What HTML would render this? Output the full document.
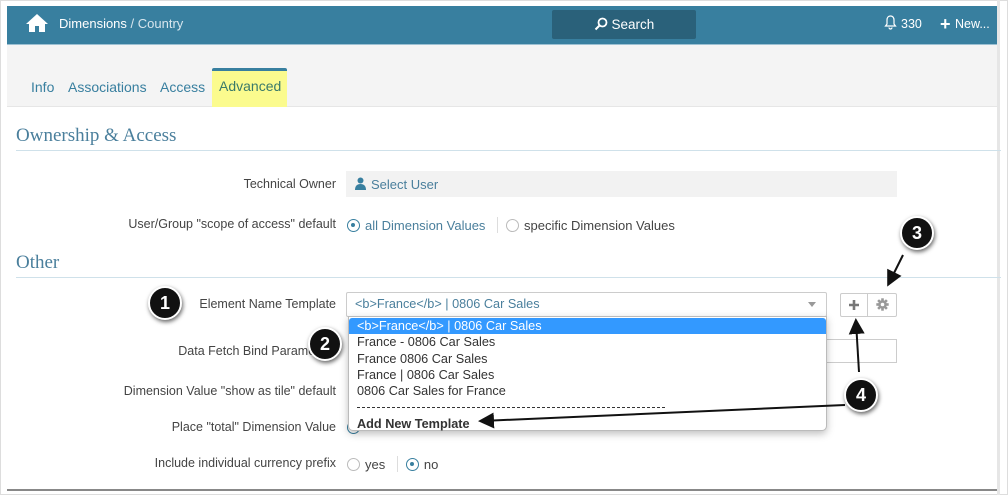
<!DOCTYPE html>
<html><head><meta charset="utf-8"><style>
*{box-sizing:border-box;margin:0;padding:0}
body{width:1008px;height:495px;background:#fff;font-family:"Liberation Sans",sans-serif;position:relative;overflow:hidden;font-size:13px}
.a{position:absolute}
.lbl{position:absolute;right:672px;color:#444;font-size:12.5px;white-space:nowrap}
.radio{display:inline-block;width:13px;height:13px;border:1px solid #bbb;border-radius:50%;vertical-align:-2px;margin-right:5px;position:relative}
.radio.on{border:1.5px solid #387f9f}
.radio.on:after{content:"";position:absolute;left:3px;top:3px;width:4px;height:4px;border-radius:50%;background:#387f9f}
.circ{position:absolute;width:34px;height:34px;border-radius:50%;background:#111;border:2px solid #fff;box-shadow:1px 2px 4px rgba(0,0,0,.6);color:#fff;font-weight:bold;font-size:18px;text-align:center;line-height:30px}
.dd div{height:16.3px;line-height:16px;padding-left:8px;font-size:12.7px;color:#333}
</style></head><body>
<div class="a" style="left:0;top:0;width:1008px;height:495px;border:1px solid #ddd"></div>
<div class="a" style="left:997px;top:0;width:3px;height:495px;background:#e6e6e6"></div>
<div class="a" style="left:7px;top:6px;width:990px;height:38px;background:#387f9f"></div>
<svg class="a" style="left:25px;top:13px" width="24" height="20" viewBox="0 0 24 20"><path d="M12 1L1 11h3v8h6v-6h4v6h6v-8h3z" fill="#fff"/></svg>
<div class="a" style="left:59px;top:16px;color:#fff;font-size:13px">Dimensions <span style="color:#d7e6ee">/ Country</span></div>
<div class="a" style="left:552px;top:10px;width:144px;height:29px;background:#2a617a;border-radius:2px;color:#fff;font-size:13.5px;text-align:center;line-height:29px">
<svg width="14" height="14" viewBox="0 0 14 14" style="vertical-align:-2px"><circle cx="8.5" cy="5.5" r="4" fill="none" stroke="#fff" stroke-width="1.8"/><path d="M5.5 8.5L1.5 12.5" stroke="#fff" stroke-width="2"/></svg> Search</div>
<svg class="a" style="left:884px;top:15px" width="13" height="15" viewBox="0 0 13 15"><path d="M6.5 1C4 1 3 3 3 5v4L1.5 11h10L10 9V5C10 3 9 1 6.5 1zM5 12.5a1.5 1.5 0 003 0" fill="none" stroke="#fff" stroke-width="1.2"/></svg>
<div class="a" style="left:901px;top:17px;color:#fff;font-size:12.5px">330</div>
<div class="a" style="left:940px;top:14px;color:#fff;font-size:18px;font-weight:bold">+</div>
<div class="a" style="left:955px;top:17px;color:#fff;font-size:12.5px">New...</div>
<div class="a" style="left:7px;top:44px;width:990px;height:63px;background:#f4f4f4;border-top:1px solid #9cc0d2;border-bottom:1px solid #e6e6e6"></div>
<div class="a" style="left:212px;top:68px;width:75px;height:39px;background:#fbfb8e;border-top:3px solid #387f9f;border-radius:2px 2px 0 0"></div>
<div class="a" style="left:31px;top:79px;color:#387f9f;font-size:14px">Info</div>
<div class="a" style="left:68px;top:79px;color:#387f9f;font-size:14px">Associations</div>
<div class="a" style="left:160px;top:79px;color:#387f9f;font-size:14px">Access</div>
<div class="a" style="left:219px;top:78px;color:#3a7a6a;font-size:14px">Advanced</div>
<div class="a" style="left:16px;top:125px;color:#4a7f9c;font-size:19px;font-family:'Liberation Serif',serif">Ownership &amp; Access</div>
<div class="a" style="left:16px;top:150px;width:985px;height:1px;background:#cfe1ea"></div>
<div class="lbl" style="top:177px">Technical Owner</div>
<div class="a" style="left:346px;top:171px;width:551px;height:26px;background:#f2f2f2"></div>
<svg class="a" style="left:355px;top:177px" width="11" height="13" viewBox="0 0 11 13"><circle cx="5.5" cy="3.5" r="3" fill="#387f9f"/><path d="M0 13c0-4 2-6 5.5-6S11 9 11 13z" fill="#387f9f"/></svg>
<div class="a" style="left:371px;top:177px;color:#4a7f9c;font-size:13px">Select User</div>
<div class="lbl" style="top:217px">User/Group "scope of access" default</div>
<div class="a" style="left:347px;top:217px;font-size:13px;color:#4a7f9c;white-space:nowrap"><span class="radio on"></span>all Dimension Values <span style="display:inline-block;width:1px;height:16px;background:#ddd;margin:0 8px;vertical-align:-3px"></span><span class="radio"></span><span style="color:#444">specific Dimension Values</span></div>
<div class="a" style="left:16px;top:252px;color:#4a7f9c;font-size:19px;font-family:'Liberation Serif',serif">Other</div>
<div class="a" style="left:16px;top:277px;width:985px;height:1px;background:#cfe1ea"></div>
<div class="lbl" style="top:297px">Element Name Template</div>
<div class="a" style="left:346px;top:292px;width:481px;height:25px;border:1px solid #ccc;border-radius:2px;background:#fff;color:#4a7f9c;font-size:12.7px;line-height:23px;padding-left:8px">&lt;b&gt;France&lt;/b&gt; | 0806 Car Sales</div>
<div class="a" style="left:808px;top:302px;border-left:4px solid transparent;border-right:4px solid transparent;border-top:5px solid #999"></div>
<div class="a" style="left:840px;top:293px;width:57px;height:24px;border:1px solid #ccc;border-radius:2px"></div>
<div class="a" style="left:867px;top:293px;width:1px;height:24px;background:#ccc"></div>
<svg class="a" style="left:848px;top:299px" width="12" height="12" viewBox="0 0 12 12"><path d="M6 1v10M1 6h10" stroke="#777" stroke-width="2.6"/></svg>
<svg class="a" style="left:876px;top:298px" width="13" height="13" viewBox="0 0 13 13"><g fill="#999"><circle cx="6.5" cy="6.5" r="4.2"/><rect x="5.2" y="0.3" width="2.6" height="12.4"/><rect x="0.3" y="5.2" width="12.4" height="2.6"/><rect x="5.2" y="0.3" width="2.6" height="12.4" transform="rotate(45 6.5 6.5)"/><rect x="5.2" y="0.3" width="2.6" height="12.4" transform="rotate(-45 6.5 6.5)"/></g><circle cx="6.5" cy="6.5" r="1.8" fill="#fff"/></svg>
<div class="lbl" style="top:344px">Data Fetch Bind Parameters</div>
<div class="a" style="left:820px;top:339px;width:77px;height:24px;border:1px solid #ccc"></div>
<div class="lbl" style="top:384px">Dimension Value "show as tile" default</div>
<div class="lbl" style="top:420px">Place "total" Dimension Value</div>
<div class="a" style="left:347px;top:420px"><span class="radio on"></span></div>
<div class="lbl" style="top:456px">Include individual currency prefix</div>
<div class="a" style="left:347px;top:456px;font-size:13px;color:#444;white-space:nowrap"><span class="radio"></span>yes <span style="display:inline-block;width:1px;height:16px;background:#ddd;margin:0 8px;vertical-align:-3px"></span><span class="radio on"></span>no</div>
<div class="a dd" style="left:348px;top:316px;width:479px;height:115px;background:#fff;border:1px solid #bbb;border-radius:0 0 5px 5px;box-shadow:0 3px 8px rgba(0,0,0,.25);padding-top:1px">
<div style="background:#3399ff;color:#fff;border-radius:3px 3px 0 0">&lt;b&gt;France&lt;/b&gt; | 0806 Car Sales</div>
<div>France - 0806 Car Sales</div><div>France 0806 Car Sales</div><div>France | 0806 Car Sales</div><div>0806 Car Sales for France</div>
<div style="height:17px;position:relative"><span style="position:absolute;left:8px;top:8px;width:308px;border-top:1.5px dashed #333"></span></div>
<div style="font-weight:bold">Add New Template</div>
</div>
<div class="a" style="left:7px;top:489px;width:990px;height:2px;background:#888"></div>
<svg class="a" style="left:0;top:0" width="1008" height="495">
<defs><marker id="h" markerWidth="8" markerHeight="8" refX="6" refY="4" orient="auto"><path d="M0 0L8 4L0 8z" fill="#111"/></marker></defs>
<path d="M903 255L889 283" stroke="#111" stroke-width="2" marker-end="url(#h)"/>
<path d="M859 372L856 322" stroke="#111" stroke-width="2" marker-end="url(#h)"/>
<path d="M845 405L482 421" stroke="#111" stroke-width="2" marker-end="url(#h)"/>
</svg>
<div class="circ" style="left:148px;top:286px">1</div>
<div class="circ" style="left:308px;top:327px">2</div>
<div class="circ" style="left:900px;top:216px">3</div>
<div class="circ" style="left:844px;top:378px">4</div>
</body></html>
